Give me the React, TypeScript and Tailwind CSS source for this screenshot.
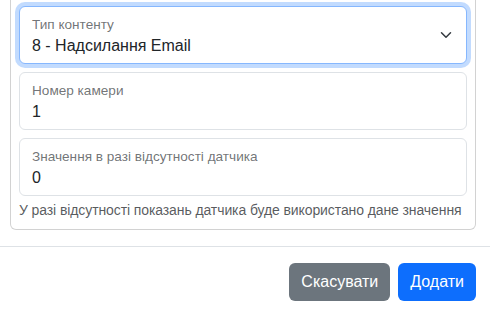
import React from "react";

const FONT = { fontFamily: '"Segoe UI", "Liberation Sans", Arial, sans-serif' };

function FloatingField({
  label,
  value,
  focused,
  select,
}: {
  label: string;
  value: string;
  focused?: boolean;
  select?: boolean;
}) {
  return (
    <div
      className={
        "relative flex h-[58px] flex-col rounded-md border bg-white px-3 " +
        (focused
          ? "border-[#86b7fe] shadow-[0_0_0_4px_rgba(13,110,253,0.25)]"
          : "border-[#dee2e6]")
      }
    >
      <div className="pt-[8px] text-[13.6px] leading-[19px] text-[#212529]/65">
        {label}
      </div>
      <div className="text-base leading-6 text-[#212529]">{value}</div>
      {select && (
        <svg
          className="absolute right-3 top-1/2 -translate-y-1/2"
          width="16"
          height="12"
          viewBox="0 0 16 16"
          fill="none"
          stroke="#343a40"
          strokeWidth="2"
          strokeLinecap="round"
          strokeLinejoin="round"
        >
          <path d="m2 5 6 6 6-6" />
        </svg>
      )}
    </div>
  );
}

export default function App() {
  return (
    <div className="h-[315px] w-[490px] overflow-hidden bg-white" style={FONT}>
      {/* modal body */}
      <div className="pb-4 pl-[10px] pr-[14px]">
        <div className="flex flex-col gap-2 rounded-b-md border-x border-b border-black/[0.175] px-2 pb-2 pt-[6px]">
          <FloatingField
            label="Тип контенту"
            value="8 - Надсилання Email"
            focused
            select
          />
          <FloatingField label="Номер камери" value="1" />
          <div>
            <FloatingField
              label="Значення в разі відсутності датчика"
              value="0"
            />
            <div className="mt-1 whitespace-nowrap text-sm leading-[21px] tracking-[-0.1px] text-[#212529]/75">
              У разі відсутності показань датчика буде використано дане значення
            </div>
          </div>
        </div>
      </div>

      {/* modal footer */}
      <div className="flex justify-end gap-2 border-t border-[#dee2e6] px-[14px] pt-4">
        <button className="h-[38px] rounded-md bg-[#6c757d] px-3 text-base text-white">
          Скасувати
        </button>
        <button className="h-[38px] rounded-md bg-[#0d6efd] px-3 text-base text-white">
          Додати
        </button>
      </div>
    </div>
  );
}
